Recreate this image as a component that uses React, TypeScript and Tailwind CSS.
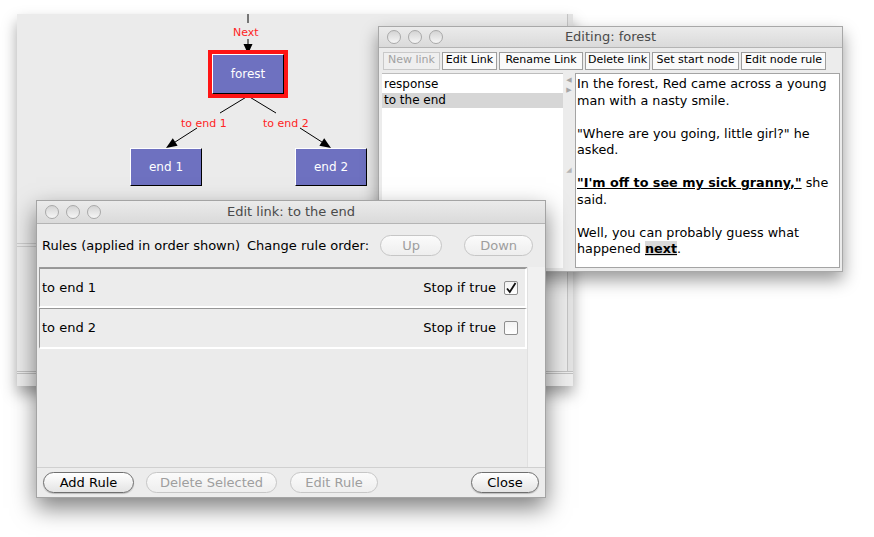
import React from "react";

// traffic lights of an inactive Aqua window
function Lights() {
  return (
    <div className="flex gap-[7px]">
      {[0, 1, 2].map((i) => (
        <span
          key={i}
          className="w-[14px] h-[14px] rounded-full border border-[#a9a9a9] bg-linear-to-b from-[#d4d4d4] to-[#f6f6f6]"
        />
      ))}
    </div>
  );
}

function TitleBar({ title, h }: { title: string; h: string }) {
  return (
    <div
      className={`${h} grid grid-cols-[1fr_auto_1fr] items-center px-[8px] bg-linear-to-b from-[#ebebeb] to-[#dadada] border-b border-[#b4b4b4]`}
    >
      <Lights />
      <span className="text-[13px] text-[#4a4a4a]">{title}</span>
      <span />
    </div>
  );
}

function Node({ label, className }: { label: string; className: string }) {
  return (
    <div
      className={`absolute flex items-center justify-center bg-[#6e71c0] border-t border-l border-white border-b border-r border-b-black border-r-black text-white text-[12px] ${className}`}
    >
      {label}
    </div>
  );
}

function GraphWindow() {
  return (
    <div className="absolute left-[17px] top-[14px] w-[556px] h-[372px] bg-[#ebebeb] flex flex-col shadow-[0_8px_14px_rgba(0,0,0,0.35)]">
      <div className="flex flex-1">
        <div className="flex-1 flex flex-col">
          <div className="relative h-[229px]">
            <svg className="absolute inset-0" width="550" height="229">
              <line x1="231" y1="0" x2="231" y2="9" stroke="#000" strokeWidth="1" />
              <line x1="231" y1="25" x2="231" y2="33" stroke="#000" strokeWidth="1" />
              <polygon points="226.5,30 235.5,30 231,40" fill="#000" />
              <line x1="231" y1="82" x2="203" y2="99" stroke="#000" strokeWidth="1" />
              <line x1="180" y1="114" x2="155" y2="130" stroke="#000" strokeWidth="1" />
              <polygon points="149,134 160.6,131.8 155.8,124.2" fill="#000" />
              <line x1="231" y1="82" x2="259" y2="99" stroke="#000" strokeWidth="1" />
              <line x1="283" y1="114" x2="308" y2="130" stroke="#000" strokeWidth="1" />
              <polygon points="314,134 302.4,131.8 307.2,124.2" fill="#000" />
            </svg>
            <span className="absolute left-[216px] top-[11px] text-[11px] text-[#ff2424]">Next</span>
            <div className="absolute left-[191px] top-[36px] w-[80px] h-[48px] border-[4px] border-[#ff1414]">
              <Node label="forest" className="inset-0" />
            </div>
            <span className="absolute left-[164px] top-[102px] text-[11px] text-[#ff2424]">to end 1</span>
            <span className="absolute left-[246px] top-[102px] text-[11px] text-[#ff2424]">to end 2</span>
            <Node label="end 1" className="left-[113px] top-[134px] w-[72px] h-[38px]" />
            <Node label="end 2" className="left-[278px] top-[134px] w-[72px] h-[38px]" />
          </div>
          <div className="h-[4px] border-y border-[#cdcdcd]" />
          <div className="flex-1" />
        </div>
        <div className="w-[6px] border-l border-[#c4c4c4] bg-[#e2e2e2]" />
      </div>
      <div className="h-[15px] border-t-[3px] border-double border-[#c0c0c0] bg-[#ededed]" />
    </div>
  );
}

const toolButtons = [
  { label: "New link", w: "w-[57px]", off: true },
  { label: "Edit Link", w: "w-[55px]", off: false },
  { label: "Rename Link", w: "w-[84px]", off: false },
  { label: "Delete link", w: "w-[65px]", off: false },
  { label: "Set start node", w: "w-[87px]", off: false },
  { label: "Edit node rule", w: "w-[85px]", off: false },
];

function EditingWindow() {
  return (
    <div className="absolute left-[378px] top-[26px] w-[465px] h-[246px] bg-[#ececec] border border-[#a8a8a8] flex flex-col shadow-[0_8px_16px_rgba(0,0,0,0.4)]">
      <TitleBar title="Editing: forest" h="h-[21px]" />
      <div className="h-[25px] flex items-center gap-[2px] pl-[4px]">
        {toolButtons.map((b) => (
          <div
            key={b.label}
            className={`${b.w} h-[18px] flex items-center justify-center text-[11px] whitespace-nowrap border ${
              b.off
                ? "border-[#c9c9c9] bg-[#efefef] text-[#a2a2a2]"
                : "border-[#9e9e9e] bg-[#fafafa] text-black"
            }`}
          >
            {b.label}
          </div>
        ))}
      </div>
      <div className="flex-1 flex pl-[3px] pr-[2px] pb-[3px] text-[12px] text-black">
        <div className="w-[181px] bg-white border-t border-[#bdbdbd] pt-[3px]">
          <div className="h-[15.5px] leading-[15.5px] pl-[2px]">response</div>
          <div className="h-[15.5px] leading-[15.5px] pl-[2px] bg-[#d6d6d6]">to the end</div>
        </div>
        <div className="w-[12px] flex flex-col items-center pt-[2px] text-[#a6a6a6] text-[7px] leading-[10px]">
          <span>◀</span>
          <span>▶</span>
          <span className="mt-[70px] text-[#b5b5b5]">◢</span>
        </div>
        <div className="flex-1 bg-white border border-[#a4a4a4] pl-[1px] pt-[2px] text-[12.75px] leading-[16.5px]">
          <p>In the forest, Red came across a young</p>
          <p>man with a nasty smile.</p>
          <p className="mt-[16.5px]">"Where are you going, little girl?" he</p>
          <p>asked.</p>
          <p className="mt-[16.5px]">
            <span className="font-bold underline">"I'm off to see my sick granny,"</span> she
          </p>
          <p>said.</p>
          <p className="mt-[16.5px]">Well, you can probably guess what</p>
          <p>
            happened <span className="font-bold underline bg-[#d9d9d9]">next</span>.
          </p>
        </div>
      </div>
    </div>
  );
}

function Pill({ label, w, off }: { label: string; w: string; off?: boolean }) {
  return (
    <div
      className={`${w} h-[21px] rounded-full flex items-center justify-center text-[13px] border ${
        off
          ? "border-[#c6c6c6] text-[#9e9e9e] bg-linear-to-b from-[#fbfbfb] to-[#eeeeee]"
          : "border-[#6f6f6f] text-black bg-linear-to-b from-white to-[#e4e4e4] shadow-[0_1px_1px_rgba(0,0,0,0.2)]"
      }`}
    >
      {label}
    </div>
  );
}

function RuleRow({ label, checked, h }: { label: string; checked: boolean; h: string }) {
  return (
    <div
      className={`${h} flex items-center justify-between pl-[2px] pr-[7px] bg-[#ececec] border-t border-l border-[#969696] border-b-2 border-r-2 border-b-white border-r-white`}
    >
      <span>{label}</span>
      <div className="flex items-center gap-[8px]">
        <span>Stop if true</span>
        <span className="w-[14px] h-[14px] rounded-[2px] border border-[#8e8e8e] bg-linear-to-b from-[#f2f2f2] to-white flex items-center justify-center">
          {checked && (
            <svg width="12" height="12" viewBox="0 0 12 12">
              <path d="M2 6.5 L4.8 10 L10.5 1" fill="none" stroke="#111" strokeWidth="1.8" />
            </svg>
          )}
        </span>
      </div>
    </div>
  );
}

function EditLinkDialog() {
  return (
    <div className="absolute left-[36px] top-[200px] w-[510px] h-[298px] bg-[#ececec] border border-[#a4a4a4] flex flex-col shadow-[0_10px_22px_rgba(0,0,0,0.5)] text-[13px] text-black">
      <TitleBar title="Edit link: to the end" h="h-[23px]" />
      <div className="h-[43px] flex items-center pl-[5px]">
        <span>Rules (applied in order shown)</span>
        <span className="ml-[7px]">Change rule order:</span>
        <div className="ml-[11px] flex gap-[22px]">
          <Pill label="Up" w="w-[62px]" off />
          <Pill label="Down" w="w-[69px]" off />
        </div>
      </div>
      <div className="flex-1 flex pl-[2px]">
        <div className="flex-1 flex flex-col bg-[#ebebeb] border-t border-[#9a9a9a]">
          <RuleRow label="to end 1" checked h="h-[40px]" />
          <RuleRow label="to end 2" checked={false} h="h-[41px]" />
        </div>
        <div className="w-[18px] bg-[#f1f1f1] border-l border-[#e0e0e0]" />
      </div>
      <div className="h-[30px] flex items-center px-[6px] border-t border-[#d0d0d0]">
        <Pill label="Add Rule" w="w-[91px]" />
        <div className="ml-[12px]">
          <Pill label="Delete Selected" w="w-[131px]" off />
        </div>
        <div className="ml-[13px]">
          <Pill label="Edit Rule" w="w-[88px]" off />
        </div>
        <div className="ml-auto">
          <Pill label="Close" w="w-[68px]" />
        </div>
      </div>
    </div>
  );
}

export default function App() {
  return (
    <div className="relative w-[874px] h-[537px] overflow-hidden bg-white font-['DejaVu_Sans',sans-serif]">
      <GraphWindow />
      <EditingWindow />
      <EditLinkDialog />
    </div>
  );
}
